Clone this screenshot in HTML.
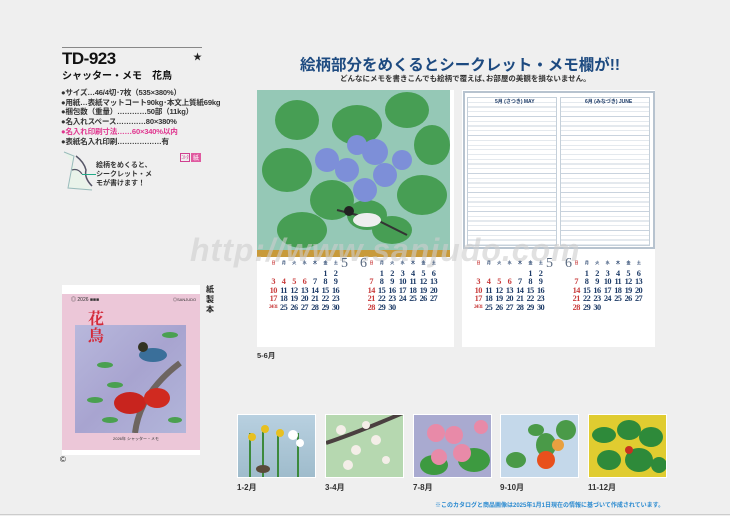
<!DOCTYPE html>
<html><head><meta charset="utf-8"><style>
*{margin:0;padding:0;box-sizing:border-box}
body{width:730px;height:516px;background:#efefef;position:relative;overflow:hidden;font-family:"Liberation Sans","Noto Sans CJK JP",sans-serif;color:#222}
.a{position:absolute}
.spec div{font-size:7.6px;line-height:9.7px;white-space:nowrap;font-weight:bold;color:#333;letter-spacing:-0.2px}
.cal{position:absolute;display:grid;grid-template-columns:repeat(7,10.4px);grid-auto-rows:8.6px;font-family:"Liberation Serif",serif;font-weight:bold;font-size:8.3px;color:#1c3a66;text-align:center;line-height:9px;letter-spacing:-0.6px}
.cal .r{color:#c83a3a}
.cal .h{font-size:4px;color:#c83a3a;line-height:6px}
.cal .h2{font-size:4px;color:#1c3a66;line-height:6px}
.thumb{position:absolute;top:414px;width:79px;height:64px;border:1px solid #fff}
.lab{position:absolute;top:482px;font-size:8px;font-weight:bold;color:#333}
.memo{position:absolute;background:#fff;border:2px solid #b7c3cf}
.mcol{position:absolute;top:4px;width:90px;height:149px;border:1px solid #c5d0da;background:repeating-linear-gradient(#fff 0 4px,#c9d3de 4px 4.75px)}
</style></head><body>

<div class="a" style="left:62px;top:47px;width:140px;height:1px;background:#888"></div>
<div class="a" style="left:62px;top:49px;font-size:17px;font-weight:bold;color:#111;letter-spacing:-0.5px">TD-923</div>
<div class="a" style="left:193px;top:50px;font-size:9px">★</div>
<div class="a" style="left:62px;top:67px;font-size:10px;font-weight:bold;color:#111">シャッター・メモ　花鳥</div>

<div class="a spec" style="left:61px;top:88px">
<div>●サイズ…46/4切･7枚（535×380%）</div>
<div>●用紙…表紙マットコート90kg･本文上質紙69kg</div>
<div>●梱包数（重量）…………50部（11kg）</div>
<div>●名入れスペース…………80×380%</div>
<div style="color:#e0368f">●名入れ印刷寸法……60×340%以内</div>
<div>●表紙名入れ印刷………………有</div>
</div>
<div class="a" style="left:180px;top:153px;width:10px;height:9px;border:1px solid #d04090;font-size:5px;color:#d04090;text-align:center">ｺﾄﾀ</div>
<div class="a" style="left:191px;top:153px;width:10px;height:9px;background:#e05aa0;font-size:6px;color:#fff;text-align:center">紙</div>
<svg class="a" style="left:62px;top:150px" width="40" height="42"><path d="M2 2 L12 6 L6 38 L30 40" fill="#e9f3ea" stroke="#9bb" stroke-width="1"/><path d="M14 6 q8 6 10 14 q-2 8 6 16" fill="none" stroke="#556" stroke-width="1.5"/><path d="M10 20 q6 -2 10 4" fill="none" stroke="#556" stroke-width="1.2"/></svg>
<div class="a" style="left:82px;top:174px;width:14px;height:1px;background:#2a8"></div>
<div class="a" style="left:96px;top:161px;font-size:7px;line-height:9px;font-weight:bold;color:#333">絵柄をめくると、<br>シークレット・メ<br>モが書けます！</div>

<!-- cover -->
<div class="a" style="left:62px;top:285px;width:138px;height:170px;background:#fff"></div>
<div class="a" style="left:62px;top:294px;width:138px;height:156px;background:#ecc7d8"></div>
<div class="a" style="left:75px;top:325px;width:111px;height:108px;background:linear-gradient(135deg,#b8b8dc,#a8a4d0 50%,#b2b6da)"></div>
<svg class="a" style="left:75px;top:325px" width="111" height="108"><path d="M60 108 q5-40 45-70" stroke="#6d6560" stroke-width="6" fill="none"/><ellipse cx="55" cy="78" rx="16" ry="11" fill="#c8241e"/><ellipse cx="82" cy="73" rx="13" ry="10" fill="#d02a20"/><ellipse cx="78" cy="30" rx="14" ry="7" fill="#3a6f9a"/><circle cx="68" cy="22" r="5" fill="#332"/><g fill="#4aa050"><ellipse cx="30" cy="40" rx="8" ry="3"/><ellipse cx="40" cy="60" rx="8" ry="3"/><ellipse cx="20" cy="75" rx="8" ry="3"/><ellipse cx="95" cy="10" rx="8" ry="3"/><ellipse cx="35" cy="95" rx="8" ry="3"/><ellipse cx="100" cy="95" rx="7" ry="3"/></g></svg>
<div class="a" style="left:88px;top:309px;font-size:16px;line-height:17px;color:#d42b3a;font-family:'Noto Serif CJK SC',serif;font-weight:bold;width:20px">花<br>鳥</div>
<div class="a" style="left:71px;top:296px;font-size:5px;color:#333">◎ 2026 ■■■</div>
<div class="a" style="left:173px;top:297px;font-size:4px;color:#333">◎SANJUDO</div>
<div class="a" style="left:113px;top:436px;font-size:4px;color:#333">2026年 シャッター・メモ</div>
<div class="a" style="left:206px;top:285px;font-size:8px;line-height:10px;width:9px;font-weight:bold">紙製本</div>
<div class="a" style="left:60px;top:455px;font-size:8px">©</div>

<!-- headline -->
<div class="a" style="left:300px;top:53px;font-size:15.5px;font-weight:bold;color:#1d4a80;white-space:nowrap">絵柄部分をめくるとシークレット・メモ欄が!!</div>
<div class="a" style="left:340px;top:73px;font-size:7.5px;font-weight:bold;color:#333;white-space:nowrap">どんなにメモを書きこんでも絵柄で覆えば､お部屋の美観を損ないません。</div>

<!-- left panel -->
<div class="a" style="left:257px;top:90px;width:197px;height:257px;background:#fff"></div>
<div class="a" style="left:257px;top:90px;width:193px;height:160px;background:#95c8b6"></div>
<svg class="a" style="left:257px;top:90px" width="193" height="160"><g fill="#3f9a4a" opacity=".9"><ellipse cx="40" cy="30" rx="22" ry="20"/><ellipse cx="30" cy="80" rx="25" ry="22"/><ellipse cx="45" cy="140" rx="25" ry="18"/><ellipse cx="100" cy="35" rx="25" ry="20"/><ellipse cx="150" cy="20" rx="22" ry="18"/><ellipse cx="175" cy="55" rx="18" ry="20"/><ellipse cx="165" cy="105" rx="25" ry="20"/><ellipse cx="75" cy="110" rx="22" ry="20"/><ellipse cx="110" cy="125" rx="20" ry="15"/><ellipse cx="135" cy="140" rx="20" ry="14"/></g><g fill="#7d8fd8"><circle cx="70" cy="70" r="12"/><circle cx="90" cy="80" r="12"/><circle cx="118" cy="62" r="13"/><circle cx="128" cy="85" r="12"/><circle cx="108" cy="100" r="12"/><circle cx="145" cy="70" r="10"/><circle cx="100" cy="55" r="10"/></g><path d="M80 120 l40 10 l30 15" stroke="#333" stroke-width="2" fill="none"/><ellipse cx="110" cy="130" rx="14" ry="7" fill="#eee"/><circle cx="92" cy="121" r="5" fill="#222"/></svg>
<div class="a" style="left:257px;top:250px;width:193px;height:7px;background:#c89a3a"></div>

<!-- right panel -->
<div class="a" style="left:462px;top:90px;width:193px;height:257px;background:#fff"></div>
<div class="memo" style="left:463px;top:91px;width:192px;height:158px">
<div class="mcol" style="left:2px"></div><div class="mcol" style="left:95px"></div>
<div class="a" style="left:30px;top:5px;font-size:5px;font-weight:bold;color:#1c3a66">5月 (さつき) MAY</div>
<div class="a" style="left:120px;top:5px;font-size:5px;font-weight:bold;color:#1c3a66">6月 (みなづき) JUNE</div>
</div>

<div class="a" style="left:190px;top:232px;font-size:32px;font-weight:bold;font-style:italic;color:rgba(205,205,205,.6);white-space:nowrap;letter-spacing:1px">http://www.sanjudo.com</div>

<div class="a" style="left:341px;top:256px;font-size:14px;font-family:'Liberation Serif',serif;color:#5a6a80">5</div>
<div class="a" style="left:360px;top:256px;font-size:14px;font-family:'Liberation Serif',serif;color:#5a6a80">6</div>
<div class="a" style="left:546px;top:256px;font-size:14px;font-family:'Liberation Serif',serif;color:#5a6a80">5</div>
<div class="a" style="left:565px;top:256px;font-size:14px;font-family:'Liberation Serif',serif;color:#5a6a80">6</div>

<div class="cal" style="left:268px;top:260px">
<span class="h">日</span><span class="h2">月</span><span class="h2">火</span><span class="h2">水</span><span class="h2">木</span><span class="h2">金</span><span class="h2">土</span>
<span></span><span></span><span></span><span></span><span></span><span>1</span><span>2</span>
<span class="r">3</span><span class="r">4</span><span class="r">5</span><span class="r">6</span><span>7</span><span>8</span><span>9</span>
<span class="r">10</span><span>11</span><span>12</span><span>13</span><span>14</span><span>15</span><span>16</span>
<span class="r">17</span><span>18</span><span>19</span><span>20</span><span>21</span><span>22</span><span>23</span>
<span class="r" style="font-size:5px">24/31</span><span>25</span><span>26</span><span>27</span><span>28</span><span>29</span><span>30</span>
</div>
<div class="cal" style="left:366px;top:260px">
<span class="h">日</span><span class="h2">月</span><span class="h2">火</span><span class="h2">水</span><span class="h2">木</span><span class="h2">金</span><span class="h2">土</span>
<span></span><span>1</span><span>2</span><span>3</span><span>4</span><span>5</span><span>6</span>
<span class="r">7</span><span>8</span><span>9</span><span>10</span><span>11</span><span>12</span><span>13</span>
<span class="r">14</span><span>15</span><span>16</span><span>17</span><span>18</span><span>19</span><span>20</span>
<span class="r">21</span><span>22</span><span>23</span><span>24</span><span>25</span><span>26</span><span>27</span>
<span class="r">28</span><span>29</span><span>30</span>
</div>
<div class="cal" style="left:473px;top:260px">
<span class="h">日</span><span class="h2">月</span><span class="h2">火</span><span class="h2">水</span><span class="h2">木</span><span class="h2">金</span><span class="h2">土</span>
<span></span><span></span><span></span><span></span><span></span><span>1</span><span>2</span>
<span class="r">3</span><span class="r">4</span><span class="r">5</span><span class="r">6</span><span>7</span><span>8</span><span>9</span>
<span class="r">10</span><span>11</span><span>12</span><span>13</span><span>14</span><span>15</span><span>16</span>
<span class="r">17</span><span>18</span><span>19</span><span>20</span><span>21</span><span>22</span><span>23</span>
<span class="r" style="font-size:5px">24/31</span><span>25</span><span>26</span><span>27</span><span>28</span><span>29</span><span>30</span>
</div>
<div class="cal" style="left:571px;top:260px">
<span class="h">日</span><span class="h2">月</span><span class="h2">火</span><span class="h2">水</span><span class="h2">木</span><span class="h2">金</span><span class="h2">土</span>
<span></span><span>1</span><span>2</span><span>3</span><span>4</span><span>5</span><span>6</span>
<span class="r">7</span><span>8</span><span>9</span><span>10</span><span>11</span><span>12</span><span>13</span>
<span class="r">14</span><span>15</span><span>16</span><span>17</span><span>18</span><span>19</span><span>20</span>
<span class="r">21</span><span>22</span><span>23</span><span>24</span><span>25</span><span>26</span><span>27</span>
<span class="r">28</span><span>29</span><span>30</span>
</div>
<div class="a" style="left:257px;top:350px;font-size:7.5px;font-weight:bold;color:#333">5-6月</div>

<!-- thumbnails -->
<div class="thumb" style="left:237px;background:linear-gradient(#b8d0e0,#9fbccc);"><svg width="77" height="62"><g stroke="#3c8a3c" stroke-width="2"><path d="M12 62 V18 M25 62 V14 M40 62 V20 M60 62 V18"/></g><g fill="#e8c020"><circle cx="14" cy="22" r="4"/><circle cx="27" cy="14" r="4"/><circle cx="42" cy="18" r="4"/></g><g fill="#fff"><circle cx="55" cy="20" r="5"/><circle cx="62" cy="28" r="4"/></g><ellipse cx="25" cy="54" rx="7" ry="4" fill="#5a4a3a"/></svg></div>
<div class="thumb" style="left:325px;background:#b6d8b0"><svg width="77" height="62"><path d="M0 28 q30-10 77-30" stroke="#4a4040" stroke-width="4" fill="none"/><g fill="#f4eee8"><circle cx="15" cy="15" r="5"/><circle cx="30" cy="35" r="5"/><circle cx="50" cy="25" r="5"/><circle cx="22" cy="50" r="5"/><circle cx="60" cy="45" r="4"/><circle cx="40" cy="10" r="4"/></g></svg></div>
<div class="thumb" style="left:413px;background:#a9aad0"><svg width="77" height="62"><g fill="#3d9a40"><ellipse cx="20" cy="50" rx="14" ry="10"/><ellipse cx="60" cy="45" rx="16" ry="12"/></g><g fill="#e88aa8"><circle cx="22" cy="18" r="9"/><circle cx="40" cy="20" r="9"/><circle cx="48" cy="38" r="9"/><circle cx="25" cy="42" r="8"/><circle cx="67" cy="12" r="7"/></g></svg></div>
<div class="thumb" style="left:500px;background:#c4d8ea"><svg width="77" height="62"><g fill="#4a9a48"><ellipse cx="15" cy="45" rx="10" ry="8"/><ellipse cx="45" cy="30" rx="10" ry="12"/><ellipse cx="65" cy="15" rx="10" ry="10"/><ellipse cx="35" cy="15" rx="8" ry="6"/></g><circle cx="45" cy="45" r="9" fill="#e8501c"/><circle cx="57" cy="30" r="6" fill="#e8a040"/></svg></div>
<div class="thumb" style="left:588px;background:#e0cc30"><svg width="77" height="62"><g fill="#2e8a3a"><ellipse cx="15" cy="20" rx="12" ry="8"/><ellipse cx="40" cy="15" rx="12" ry="10"/><ellipse cx="62" cy="22" rx="12" ry="10"/><ellipse cx="20" cy="45" rx="12" ry="10"/><ellipse cx="50" cy="45" rx="14" ry="12"/><ellipse cx="70" cy="50" rx="8" ry="8"/></g><circle cx="40" cy="35" r="4" fill="#c83020"/></svg></div>
<div class="lab" style="left:237px">1-2月</div>
<div class="lab" style="left:325px">3-4月</div>
<div class="lab" style="left:413px">7-8月</div>
<div class="lab" style="left:500px">9-10月</div>
<div class="lab" style="left:588px">11-12月</div>
<div class="a" style="left:435px;top:500px;font-size:6px;font-weight:bold;color:#2a8ad0;white-space:nowrap">※このカタログと商品画像は2025年1月1日現在の情報に基づいて作成されています。</div>
<div class="a" style="left:0;top:514px;width:730px;height:1px;background:#ccc"></div>
</body></html>
